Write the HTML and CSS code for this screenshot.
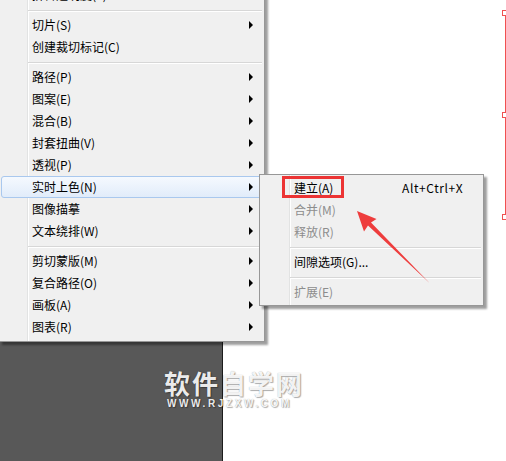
FILE: index.html
```html
<!DOCTYPE html>
<html lang="zh-CN">
<head>
  <meta charset="UTF-8" />
  <title>实时上色菜单</title>
  <link rel="stylesheet" href="styles.css">
</head>
<body>

<div class="screen">
  <div class="canvas-dark"></div>

  <!-- 对象菜单 -->
  <div class="menu main-menu">
    <div class="item"><span class="label">拼合透明度(F)...</span></div>
    <div class="sep"></div>
    <div class="item"><span class="label">切片(S)</span><i class="arrow"></i></div>
    <div class="item"><span class="label">创建裁切标记(C)</span></div>
    <div class="sep"></div>
    <div class="item"><span class="label">路径(P)</span><i class="arrow"></i></div>
    <div class="item"><span class="label">图案(E)</span><i class="arrow"></i></div>
    <div class="item"><span class="label">混合(B)</span><i class="arrow"></i></div>
    <div class="item"><span class="label">封套扭曲(V)</span><i class="arrow"></i></div>
    <div class="item"><span class="label">透视(P)</span><i class="arrow"></i></div>
    <div class="item active"><span class="label">实时上色(N)</span><i class="arrow"></i></div>
    <div class="item"><span class="label">图像描摹</span><i class="arrow"></i></div>
    <div class="item"><span class="label">文本绕排(W)</span><i class="arrow"></i></div>
    <div class="sep"></div>
    <div class="item"><span class="label">剪切蒙版(M)</span><i class="arrow"></i></div>
    <div class="item"><span class="label">复合路径(O)</span><i class="arrow"></i></div>
    <div class="item"><span class="label">画板(A)</span><i class="arrow"></i></div>
    <div class="item"><span class="label">图表(R)</span><i class="arrow"></i></div>
  </div>

  <!-- 实时上色 子菜单 -->
  <div class="menu sub-menu">
    <div class="item"><span class="label">建立(A)</span><span class="shortcut">Alt+Ctrl+X</span></div>
    <div class="item disabled"><span class="label">合并(M)</span></div>
    <div class="item disabled"><span class="label">释放(R)</span></div>
    <div class="sep"></div>
    <div class="item"><span class="label">间隙选项(G)...</span></div>
    <div class="sep"></div>
    <div class="item disabled"><span class="label">扩展(E)</span></div>
  </div>

  <div class="watermark">
    <div class="wm-title">软件自学网</div>
    <div class="wm-url">WWW.RJZXW.COM</div>
  </div>

  <!-- 标注 -->
  <svg class="annot" width="506" height="461" viewBox="0 0 506 461">
    <rect x="283.5" y="177.5" width="59" height="19" fill="none" stroke="#ec3434" stroke-width="3"/>
    <polygon points="357,211 376.5,219 371,222.5 429.5,283 368,225.5 364,231.5" fill="#ee3d3d"/>
    <g fill="none" stroke="#f05050" stroke-width="1">
      <line x1="505.5" y1="15" x2="505.5" y2="113"/>
      <line x1="505.5" y1="118" x2="505.5" y2="214"/>
      <rect x="502.5" y="10.5" width="6" height="5"/>
      <rect x="502.5" y="112.5" width="6" height="5"/>
      <rect x="502.5" y="214.5" width="6" height="5"/>
    </g>
  </svg>
</div>

</body>
</html>
```

FILE: styles.css
```css
* {
  box-sizing: border-box;
}

body {
  margin: 0;
  background: #ffffff;
  font-family: "Noto Sans CJK SC", "Noto Sans", sans-serif;
}

.screen {
  position: relative;
  width: 506px;
  height: 461px;
  overflow: hidden;
  background: #ffffff;
}

.canvas-dark {
  position: absolute;
  left: 0;
  top: 280px;
  width: 223px;
  height: 181px;
  background: #585858;
  border-right: 1px solid #1c1c1c;
}

/* menus */
.menu {
  position: absolute;
  display: flex;
  flex-direction: column;
  border: 1px solid #979797;
  background:
    linear-gradient(to right, transparent var(--gutter), #e2e3e3 var(--gutter),
      #e2e3e3 calc(var(--gutter) + 1px), #ffffff calc(var(--gutter) + 1px),
      #ffffff calc(var(--gutter) + 2px), transparent calc(var(--gutter) + 2px)),
    #f0f0f0;
  box-shadow: 3px 3px 2px rgba(0, 0, 0, 0.38);
  font-size: 12px;
  color: #000000;
}

.main-menu {
  --gutter: 27px;
  left: -1px;
  top: -20px;
  width: 266px;
  padding: 3px 0;
}

.sub-menu {
  --gutter: 29px;
  left: 259px;
  top: 174px;
  width: 225px;
  padding: 2px 0;
}

.item {
  display: flex;
  align-items: center;
  height: 22px;
  line-height: 22px;
  white-space: nowrap;
}

.main-menu .item {
  padding: 0 11px 0 32px;
}

.sub-menu .item {
  padding: 0 10px 0 34px;
}

.sub-menu .label {
  width: 108px;
}

.shortcut {
  letter-spacing: 0.6px;
}

.item.disabled {
  color: #8d8d8d;
}

.main-menu .item.active {
  margin: 0 2px 0 1px;
  padding-left: 30px;
  padding-right: 8px;
  border: 1px solid #a9c8ee;
  border-radius: 3px;
  background: linear-gradient(to bottom, #f5f9fe, #e1ecfa);
}

.arrow {
  margin-left: auto;
  width: 0;
  height: 0;
  border-top: 4px solid transparent;
  border-bottom: 4px solid transparent;
  border-left: 4px solid #000000;
}

.sep {
  height: 8px;
  margin: 0 2px 0 calc(var(--gutter) + 1px);
  background: linear-gradient(to bottom, transparent 4px, #d7d7d7 4px,
    #d7d7d7 5px, #ffffff 5px, #ffffff 6px, transparent 6px);
}

/* watermark */
.watermark {
  position: absolute;
  left: 164px;
  top: 367px;
  color: rgba(255, 255, 255, 0.92);
  text-shadow: 1px 1px 1px rgba(0, 0, 0, 0.3), 0 0 1px rgba(0, 0, 0, 0.35);
}

.wm-title {
  font-size: 26px;
  font-weight: bold;
  letter-spacing: 2px;
  line-height: 31px;
}

.wm-url {
  font-family: "Liberation Sans", sans-serif;
  font-size: 10px;
  font-weight: bold;
  letter-spacing: 2.6px;
  line-height: 12px;
  padding-left: 3px;
}

.annot {
  position: absolute;
  left: 0;
  top: 0;
  pointer-events: none;
}
```
